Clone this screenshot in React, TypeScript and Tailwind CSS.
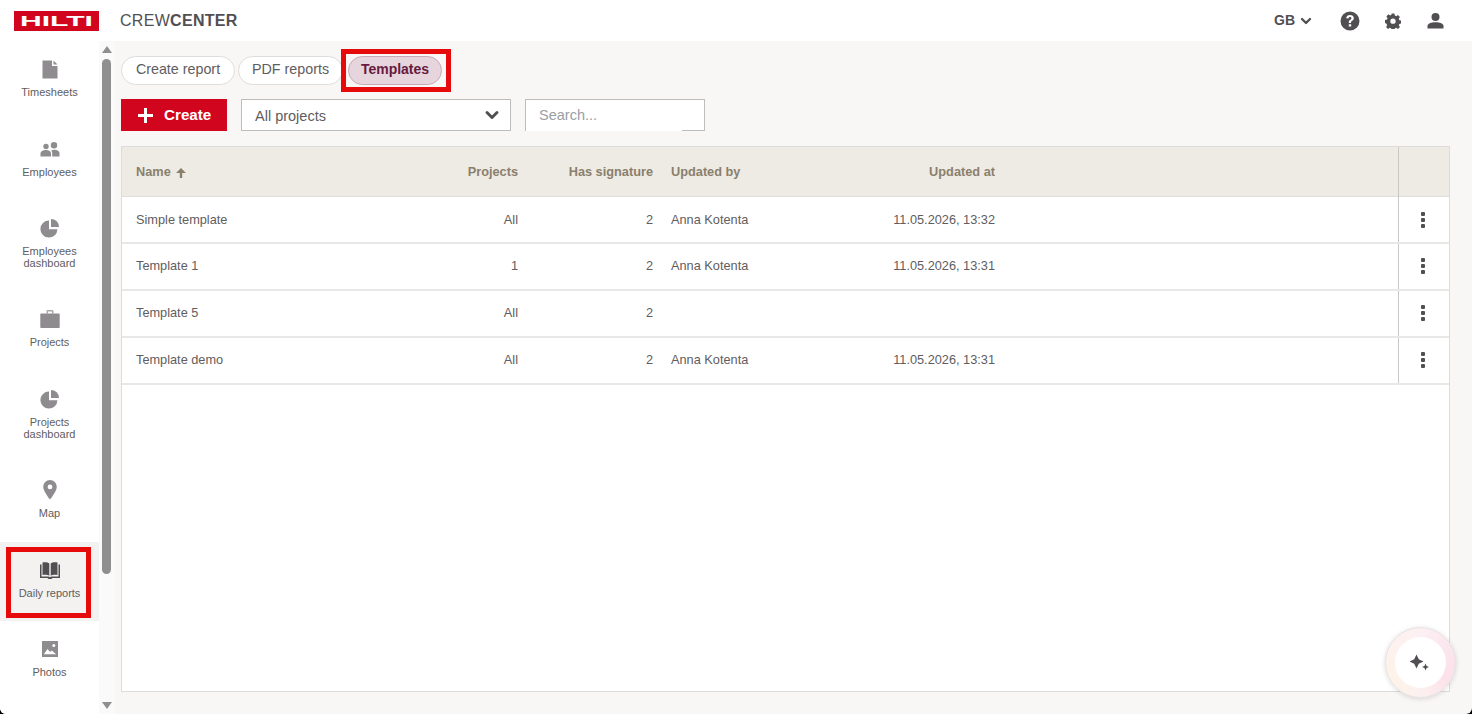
import { ReactNode } from 'react';
import { ChevronDown } from 'lucide-react';

const sans = "font-['Liberation_Sans',Arial,sans-serif]";

interface NavItem {
  label: string[];
  icon: ReactNode;
  height: string;
  active?: boolean;
}

const PieIcon = () => (
  <svg width="20" height="20" viewBox="0 0 20 20" fill="currentColor">
    <path d="M9 2.600v8.600h8.400A8.500 8.500 0 1 1 9 2.600z" />
    <path d="M11 1a8 8 0 0 1 8 8h-8z" />
  </svg>
);

const navItems: NavItem[] = [
  {
    label: ['Timesheets'],
    height: 'h-[80px]',
    icon: (
      <svg width="16" height="19" viewBox="0 0 16 19" fill="currentColor">
        <path d="M0.500 0.500h9.500v5.500h5.500v12.500h-15z" />
        <path d="M11.500 0.500l4 4h-4z" />
      </svg>
    ),
  },
  {
    label: ['Employees'],
    height: 'h-[79px]',
    icon: (
      <svg width="20" height="15" viewBox="0 0 20 15" fill="currentColor">
        <circle cx="6" cy="4.500" r="2.700" />
        <circle cx="14" cy="3.200" r="3.200" />
        <path d="M0.500 14.500v-3c0-2 2.500-3.400 5.500-3.400s5 1.400 5 3.400v3z" />
        <path d="M12.200 14.500v-3.600c0-1-.4-1.800-1-2.500 1-.4 1.900-.6 2.900-.6 3 0 5.400 1.500 5.400 3.400v3.300z" />
      </svg>
    ),
  },
  { label: ['Employees', 'dashboard'], height: 'h-[91px]', icon: <PieIcon /> },
  {
    label: ['Projects'],
    height: 'h-[80px]',
    icon: (
      <svg width="20" height="18" viewBox="0 0 20 18" fill="currentColor">
        <path d="M6.500 3.500V1.200C6.500.5 7 0 7.700 0h4.600c.7 0 1.200.5 1.200 1.200v2.300H12V1.500H8v2z" opacity="0.75" />
        <path d="M1 3.500h18c.4 0 .7.3.7.7v13.100c0 .4-.3.7-.7.7H1c-.4 0-.7-.3-.7-.7V4.200c0-.4.3-.7.7-.7z" />
      </svg>
    ),
  },
  { label: ['Projects', 'dashboard'], height: 'h-[91px]', icon: <PieIcon /> },
  {
    label: ['Map'],
    height: 'h-[80px]',
    icon: (
      <svg width="14" height="20" viewBox="0 0 14 20" fill="currentColor">
        <path
          fillRule="evenodd"
          d="M7 0a6.800 6.800 0 0 1 6.800 6.800C13.800 11.500 7 19.500 7 19.500S.2 11.500.2 6.800A6.800 6.800 0 0 1 7 0zm0 4.500a2.400 2.400 0 1 0 0 4.800 2.400 2.400 0 0 0 0-4.800z"
        />
      </svg>
    ),
  },
  {
    label: ['Daily reports'],
    height: 'h-[79px]',
    active: true,
    icon: (
      <svg width="20" height="17" viewBox="0 0 20 17" fill="currentColor">
        <path d="M2.500 0.500c2.500-.5 5.500-.3 6.800 1v12.300c-1.500-1-4.500-1.300-6.800-.8z" />
        <path d="M17.500 0.500c-2.500-.5-5.500-.3-6.800 1v12.300c1.500-1 4.500-1.300 6.800-.8z" />
        <path d="M0 2.500h1.500v12h7c.5 0 1 .3 1.500.7.500-.4 1-.7 1.500-.7h7v-12H20v13.500h-7.500l-1 1h-3l-1-1H0z" />
      </svg>
    ),
  },
  {
    label: ['Photos'],
    height: 'h-[80px]',
    icon: (
      <svg width="16" height="16" viewBox="0 0 16 16">
        <rect width="16" height="16" fill="currentColor" />
        <circle cx="11.800" cy="4.600" r="1.500" fill="#fff" />
        <path d="M1.800 13.300l3.700-5.200 2.600 3 1.600-1.600 4.500 3.800z" fill="#fff" />
      </svg>
    ),
  },
];

const rows = [
  { name: 'Simple template', projects: 'All', sig: '2', by: 'Anna Kotenta', at: '11.05.2026, 13:32' },
  { name: 'Template 1', projects: '1', sig: '2', by: 'Anna Kotenta', at: '11.05.2026, 13:31' },
  { name: 'Template 5', projects: 'All', sig: '2', by: '', at: '' },
  { name: 'Template demo', projects: 'All', sig: '2', by: 'Anna Kotenta', at: '11.05.2026, 13:31' },
];

const gridCols = 'grid grid-cols-[282px_100px_135px_18px_200px_124px_1fr_51px] items-center';

function Sidebar() {
  return (
    <aside className="flex h-full w-[115px] shrink-0">
      <nav className="w-[99px] overflow-hidden bg-white">
        {navItems.map((item) => (
          <div
            key={item.label.join(' ')}
            className={`relative flex flex-col items-center pt-[18px] ${item.height} ${
              item.active ? 'bg-[#f3f2f0] text-[#524f53]' : 'text-[#8f8c8f]'
            }`}
          >
            <div className="flex h-[20px] items-center justify-center">{item.icon}</div>
            <div className="mt-[7px] text-center text-[11px] leading-[12px] text-[#5f5d60]">
              {item.label.map((l) => (
                <div key={l}>{l}</div>
              ))}
            </div>
            {item.active && (
              <div className="absolute left-[6px] top-[5px] h-[71px] w-[85px] border-[5px] border-[#e60a0a]" />
            )}
          </div>
        ))}
      </nav>
      <div className="flex w-[16px] flex-col items-center bg-[#fbfafa] pr-px pt-[5px]">
        <div className="h-0 w-0 border-x-[5px] border-b-[7px] border-x-transparent border-b-[#8f8f8f]" />
        <div className="mt-[6px] h-[515px] w-[9px] rounded-full bg-[#8f8f8f]" />
        <div className="mt-[128px] h-0 w-0 border-x-[5px] border-t-[7px] border-x-transparent border-t-[#8f8f8f]" />
      </div>
    </aside>
  );
}

function Header() {
  return (
    <header className="flex h-[41px] shrink-0 items-center bg-white pl-[14px] pr-[28px]">
      <svg width="85" height="20" viewBox="0 0 85 20" className="shrink-0">
        <rect width="85" height="20" fill="#d2051e" />
        <text
          x="6"
          y="15"
          fill="#fff"
          fontFamily="Liberation Sans, Arial, sans-serif"
          fontWeight="700"
          fontSize="14"
          textLength="73"
          lengthAdjust="spacingAndGlyphs"
        >
          HILTI
        </text>
      </svg>
      <div className="ml-[21px] text-[16px] tracking-[0.3px] text-[#524f53]">
        CREW<span className="font-bold">CENTER</span>
      </div>
      <div className="ml-auto flex items-center text-[#524f53]">
        <span className="text-[14px] font-bold">GB</span>
        <ChevronDown size={16} strokeWidth={3.5} className="ml-[3px]" />
        <svg width="20" height="20" viewBox="0 0 20 20" className="ml-[26px]" fill="currentColor">
          <path
            fillRule="evenodd"
            d="M10 .5a9.500 9.500 0 1 1 0 19 9.500 9.500 0 0 1 0-19zM10 4C7.800 4 6.400 5.200 6.200 7.300l2.200.3c.1-1 .7-1.600 1.600-1.600.8 0 1.400.5 1.400 1.200 0 .6-.3 1-1.100 1.500-1.100.7-1.500 1.400-1.500 2.600v.6h2.200v-.4c0-.7.2-1 1-1.500 1.200-.8 1.800-1.600 1.800-2.900C13.800 5.200 12.200 4 10 4zm-1.200 9.200v2.400h2.400v-2.400z"
          />
        </svg>
        <svg width="16" height="16" viewBox="0 0 18 18" className="ml-[25px]" fill="currentColor">
          <path
            fillRule="evenodd"
            d="M7.400.5h3.200l.5 2.400c.5.200 1 .4 1.400.7l2.100-1.300 2.200 2.300-1.300 2c.3.500.5 1 .6 1.500l2.400.5v3.200l-2.400.5c-.1.500-.3 1-.6 1.400l1.300 2.100-2.200 2.200-2.100-1.300c-.4.300-.9.500-1.400.6l-.5 2.400H7.400l-.5-2.400c-.5-.1-1-.3-1.400-.6l-2.100 1.300-2.200-2.200 1.300-2.100c-.3-.4-.5-.9-.6-1.400L-.1 11V7.800l2.400-.5c.1-.5.3-1 .6-1.500l-1.300-2 2.200-2.300 2.100 1.300c.4-.3.900-.5 1.400-.7zM9 6.200a3 3 0 1 0 0 6 3 3 0 0 0 0-6z"
          />
        </svg>
        <svg width="17" height="16" viewBox="0 0 17 16" className="ml-[26px]" fill="currentColor">
          <circle cx="8.500" cy="4" r="4" />
          <path d="M0.500 15.500v-2.700c0-2 3.500-3.600 8-3.600s8 1.600 8 3.600v2.700z" />
        </svg>
      </div>
    </header>
  );
}

function Tabs() {
  return (
    <div className="flex h-[29px] items-center">
      <div className="flex h-[29px] w-[114px] items-center justify-center rounded-full border border-[#dedddb] bg-white pb-px text-[14.3px] text-[#5f5d60]">
        Create report
      </div>
      <div className="ml-[3px] flex h-[29px] w-[105px] items-center justify-center rounded-full border border-[#dedddb] bg-white pb-px text-[14.3px] text-[#5f5d60]">
        PDF reports
      </div>
      <div className="relative ml-[5px] flex h-[29px] w-[94px] items-center justify-center rounded-full border border-[#c9a9b7] bg-[#e6d5dd] pb-[2px] text-[14px] font-bold text-[#671a3d]">
        Templates
        <div className="absolute left-[-8px] top-[-8px] h-[43px] w-[110px] border-[5px] border-[#e60a0a]" />
      </div>
    </div>
  );
}

function Toolbar() {
  return (
    <div className="mt-[14px] flex h-[32px] items-stretch">
      <button className="flex w-[106px] items-center bg-[#d2051e] pl-[17px] text-[15.2px] font-bold text-white">
        <svg width="15" height="15" viewBox="0 0 15 15" fill="currentColor">
          <path d="M6 0h3v6h6v3H9v6H6V9H0V6h6z" />
        </svg>
        <span className="ml-[11px]">Create</span>
      </button>
      <div className="ml-[14px] flex w-[270px] items-center justify-between border border-[#bdbdbd] bg-white pl-[13px] pr-[8px] text-[14.5px] text-[#5f5d60]">
        <span className="pt-[3px]">All projects</span>
        <ChevronDown size={20} strokeWidth={3.5} className="text-[#524f53]" />
      </div>
      <div className="relative ml-[14px] flex w-[180px] items-center border border-[#bdbdbd] bg-white pl-[13px] pt-px text-[14.5px] text-[#9aa0a6]">
        Search...
        <div className="absolute -bottom-px left-0 h-px w-[156px] bg-white" />
      </div>
    </div>
  );
}

function TemplatesTable() {
  return (
    <div className="mt-[15px] mb-[22px] min-h-0 flex-1 border border-[#dddcda] bg-white text-[12.75px]">
      <div className={`${gridCols} h-[50px] border-b border-[#dfdedb] bg-[#eeebe5] pl-[14px] font-bold text-[#8a7f6c]`}>
        <div className="flex items-center">
          Name
          <svg width="10" height="10" viewBox="0 0 10 10" className="ml-[5px] mt-px" fill="currentColor">
            <path d="M5 0l5 5H6.200v5H3.800V5H0z" />
          </svg>
        </div>
        <div className="text-right">Projects</div>
        <div className="text-right">Has signature</div>
        <div />
        <div>Updated by</div>
        <div className="text-right">Updated at</div>
        <div />
        <div className="h-[50px] border-l border-[#c9c8c6]" />
      </div>
      {rows.map((row, i) => {
        const cell = i === 0 ? 'pb-0' : 'pb-[2px]';
        return (
          <div key={row.name} className={`${gridCols} h-[47px] border-b-2 border-[#e8e8e7] pl-[14px] text-[#5f5d60]`}>
            <div className={cell}>{row.name}</div>
            <div className={`${cell} text-right`}>{row.projects}</div>
            <div className={`${cell} text-right`}>{row.sig}</div>
            <div />
            <div className={cell}>{row.by}</div>
            <div className={`${cell} text-right`}>{row.at}</div>
            <div />
            <div className={`flex items-center justify-center self-stretch border-l border-[#c9c8c6] pr-[2px] ${cell}`}>
              <div className="flex flex-col gap-[2px]">
                <div className="h-[4px] w-[4px] rounded-[1px] bg-[#524f53]" />
                <div className="h-[4px] w-[4px] rounded-[1px] bg-[#524f53]" />
                <div className="h-[4px] w-[4px] rounded-[1px] bg-[#524f53]" />
              </div>
            </div>
          </div>
        );
      })}
    </div>
  );
}

export default function App() {
  return (
    <div className="h-screen w-full overflow-hidden bg-black">
      <div className={`relative flex h-full flex-col overflow-hidden rounded-b-[6px] bg-[#f8f7f5] ${sans}`}>
        <Header />
        <div className="flex min-h-0 flex-1">
          <Sidebar />
          <main className="flex min-w-0 flex-1 flex-col pl-[6px] pr-[22px] pt-[15px]">
            <Tabs />
            <Toolbar />
            <TemplatesTable />
          </main>
        </div>
        <div className="absolute bottom-[16px] right-[16px] flex h-[71px] w-[71px] items-center justify-center rounded-full border border-[#e6e2e2] bg-[conic-gradient(#fdf0f3,#fbe6ee,#fbe1ea,#fdf0f0,#fdf3e8,#fdf2ee,#fdf0f3)] shadow-[0_1px_5px_rgba(0,0,0,0.14)]">
          <div className="flex h-[51px] w-[51px] items-center justify-center rounded-full bg-white">
            <svg width="21" height="19" viewBox="0 0 21 19" fill="#524f53" className="-ml-[2px]">
              <path d="M7.500 1.500l2.300 4.700 4.700 2.300-4.700 2.300-2.300 4.700-2.300-4.700L.5 8.500l4.700-2.300z" />
              <path d="M16.500 10.500l1.100 2.400 2.400 1.100-2.400 1.100-1.100 2.400-1.100-2.400-2.400-1.100 2.400-1.100z" />
            </svg>
          </div>
        </div>
      </div>
    </div>
  );
}
